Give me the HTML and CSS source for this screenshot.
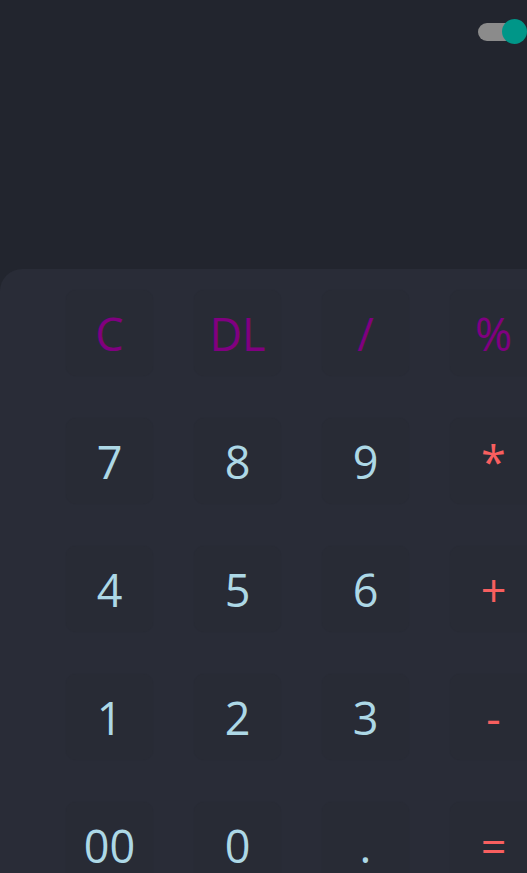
FILE: index.html
```html
<!DOCTYPE html>
<html lang="en">
<head>
<meta charset="utf-8">
<title>Calculator</title>
<link rel="stylesheet" href="styles.css">
</head>
<body>
<div class="app">
  <header class="display">
    <div class="toggle"><span class="knob"></span></div>
  </header>
  <main class="keypad">
    <div class="keys">
      <button class="key fn">C</button>
      <button class="key fn">DL</button>
      <button class="key fn">/</button>
      <button class="key fn">%</button>
      <button class="key num">7</button>
      <button class="key num">8</button>
      <button class="key num">9</button>
      <button class="key op">*</button>
      <button class="key num">4</button>
      <button class="key num">5</button>
      <button class="key num">6</button>
      <button class="key op">+</button>
      <button class="key num">1</button>
      <button class="key num">2</button>
      <button class="key num">3</button>
      <button class="key op">-</button>
      <button class="key num">00</button>
      <button class="key num">0</button>
      <button class="key num">.</button>
      <button class="key op">=</button>
    </div>
  </main>
</div>
</body>
</html>
```
FILE: styles.css
```css
html, body {
  margin: 0;
  padding: 0;
  background: #22252e;
  overflow: hidden;
  height: 873px;
}
.app {
  width: 527px;
  height: 873px;
  display: flex;
  flex-direction: column;
  font-family: "Open Sans", "Noto Sans", sans-serif;
}
.display {
  height: 269px;
  flex: none;
  display: flex;
  justify-content: flex-end;
  align-items: flex-start;
  padding: 23px 9px 0 0;
  box-sizing: border-box;
}
.toggle {
  position: relative;
  width: 40px;
  height: 18px;
  border-radius: 9px;
  background: #8b8b8b;
}
.knob {
  position: absolute;
  top: -4px;
  right: -9px;
  width: 25px;
  height: 25px;
  border-radius: 50%;
  background: #009688;
}
.keypad {
  flex: 1;
  background: #292c37;
  border-top-left-radius: 22px;
  padding: 21px 0 0 66px;
  box-sizing: border-box;
  overflow: hidden;
}
.keys {
  display: grid;
  width: max-content;
  grid-template-columns: repeat(4, 87px);
  grid-auto-rows: 86px;
  column-gap: 41px;
  row-gap: 42px;
}
.key {
  border: none;
  margin: 0;
  padding: 0;
  border-radius: 10px;
  background: #282b35;
  box-shadow: 0 0 2px rgba(0, 0, 0, 0.04);
  font-family: inherit;
  font-size: 45px;
  font-weight: 400;
  line-height: 1;
  display: flex;
  align-items: center;
  justify-content: center;
}
.fn { color: #800080; }
.num { color: #add8e6; }
.op { color: #f85f5f; }
```
